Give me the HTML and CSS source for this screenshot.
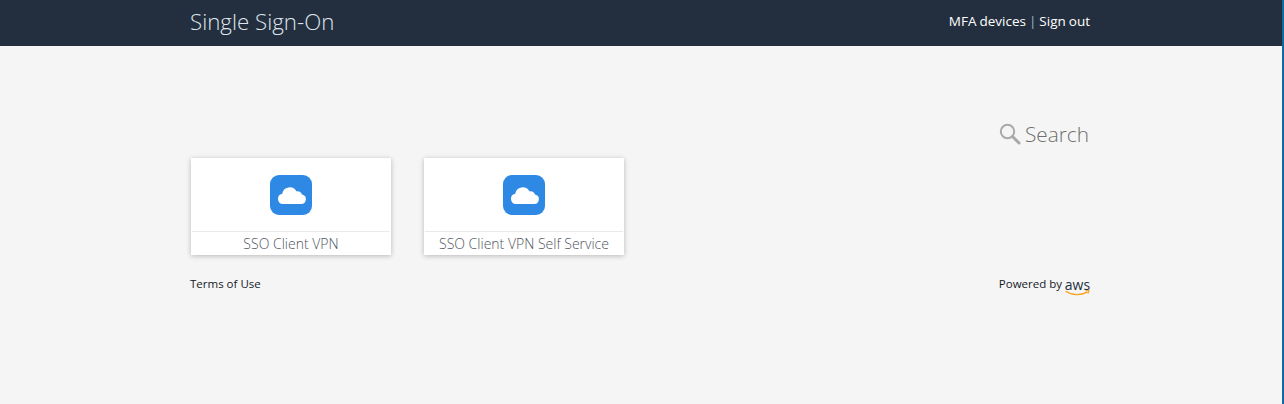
FILE: index.html
```html
<!DOCTYPE html>
<html lang="en">
<head>
    <meta charset="UTF-8">
    <title>Single Sign-On</title>
    <link rel="stylesheet" href="styles.css">
</head>
<body>
    <header class="topbar">
        <div class="wrap topbar-inner">
            <div class="brand">Single Sign-On</div>
            <nav class="topnav"><a href="#">MFA devices</a> <span class="sep">|</span> <a href="#">Sign out</a></nav>
        </div>
    </header>

    <main class="wrap">
        <div class="search-row">
            <svg class="search-icon" width="22" height="22" viewBox="0 0 22 22" fill="none" stroke="#a9a9a9">
                <circle cx="8.5" cy="8.5" r="6.7" stroke-width="2"/>
                <path d="M13.5 13.5L20 20" stroke-width="3" stroke-linecap="round"/>
            </svg>
            <span class="search-label">Search</span>
        </div>

        <div class="apps">
            <a class="app-card" href="#">
                <div class="app-icon">
                    <svg width="42" height="40" viewBox="0 0 42 40">
                        <rect width="42" height="40" rx="9" fill="#2e89e5"/>
                        <path fill="#fff" d="M13 29a5.2 5.2 0 0 1-.8-10.300 7.600 7.600 0 0 1 14.200-2.400 4.600 4.600 0 0 1 5.600 3.200 4.800 4.800 0 0 1-1.200 9.500z"/>
                    </svg>
                </div>
                <div class="app-name">SSO Client VPN</div>
            </a>
            <a class="app-card" href="#">
                <div class="app-icon">
                    <svg width="42" height="40" viewBox="0 0 42 40">
                        <rect width="42" height="40" rx="9" fill="#2e89e5"/>
                        <path fill="#fff" d="M13 29a5.2 5.2 0 0 1-.8-10.300 7.600 7.600 0 0 1 14.200-2.400 4.600 4.600 0 0 1 5.600 3.200 4.800 4.800 0 0 1-1.200 9.500z"/>
                    </svg>
                </div>
                <div class="app-name">SSO Client VPN Self Service</div>
            </a>
        </div>

        <footer class="footer">
            <a href="#">Terms of Use</a>
            <div class="powered">
                <span>Powered by</span>
                <span class="aws-logo">
                    <span class="aws-text">aws</span>
                    <svg class="aws-smile" width="25" height="6" viewBox="0 0 25 6" fill="none">
                        <path d="M1 1.500c6 4 15 4 21 .6" stroke="#f9a01b" stroke-width="1.300" stroke-linecap="round"/>
                        <path d="M20.500 .8L24 .6 22.800 3.800" stroke="#f9a01b" stroke-width="1.100"/>
                    </svg>
                </span>
            </div>
        </footer>
    </main>
</body>
</html>
```

FILE: styles.css
```css
html, body {
    height: 100%;
}
body {
    margin: 0;
    background: #f5f5f5;
    border-right: 2px solid #12699f;
    font-family: 'Open Sans', sans-serif;
    color: #16191f;
    overflow: hidden;
}
a {
    color: inherit;
    text-decoration: none;
}
.wrap {
    width: 900px;
    margin-left: 190px;
}
.topbar {
    height: 46px;
    background: #232f3e;
}
.topbar-inner {
    display: flex;
    justify-content: space-between;
    align-items: center;
    height: 42px;
}
.brand {
    font-size: 22.300px;
    font-weight: 300;
    color: #dfe6ec;
}
.topnav {
    font-size: 13.500px;
    font-weight: 500;
    color: #fff;
    word-spacing: -0.5px;
}
.sep {
    font-weight: 400;
    color: #9fb4c7;
}
.search-row {
    display: flex;
    justify-content: flex-end;
    align-items: center;
    gap: 5px;
    height: 40px;
    margin-top: 68px;
    padding-right: 1px;
}
.search-label {
    font-size: 20.800px;
    font-weight: 300;
    color: #6f6f6f;
}
.search-icon {
    margin-right: -1px;
}
.apps {
    display: flex;
    gap: 33px;
    margin-top: 4px;
    padding-left: 1px;
}
.app-card {
    width: 200px;
    height: 97px;
    background: #fff;
    box-shadow: 0 1px 5px rgba(0, 0, 0, 0.25);
    padding: 0 1px;
    box-sizing: border-box;
}
.app-icon {
    display: flex;
    justify-content: center;
    padding-top: 17px;
    height: 56px;
    border-bottom: 1px solid #eaeaea;
}
.app-icon svg {
    display: block;
}
.app-name {
    text-align: center;
    font-size: 14px;
    font-weight: 300;
    line-height: 24px;
    color: #4f5660;
}
.footer {
    display: flex;
    justify-content: space-between;
    align-items: flex-start;
    margin-top: 21px;
    font-size: 11.500px;
}
.powered {
    display: flex;
    gap: 3px;
}
.aws-logo {
    display: flex;
    flex-direction: column;
    align-items: center;
    width: 25px;
    margin-top: 1px;
}
.aws-text {
    font-size: 14px;
    line-height: 16px;
    color: #232f3e;
}
.aws-smile {
    display: block;
    margin-top: -3px;
}
```
